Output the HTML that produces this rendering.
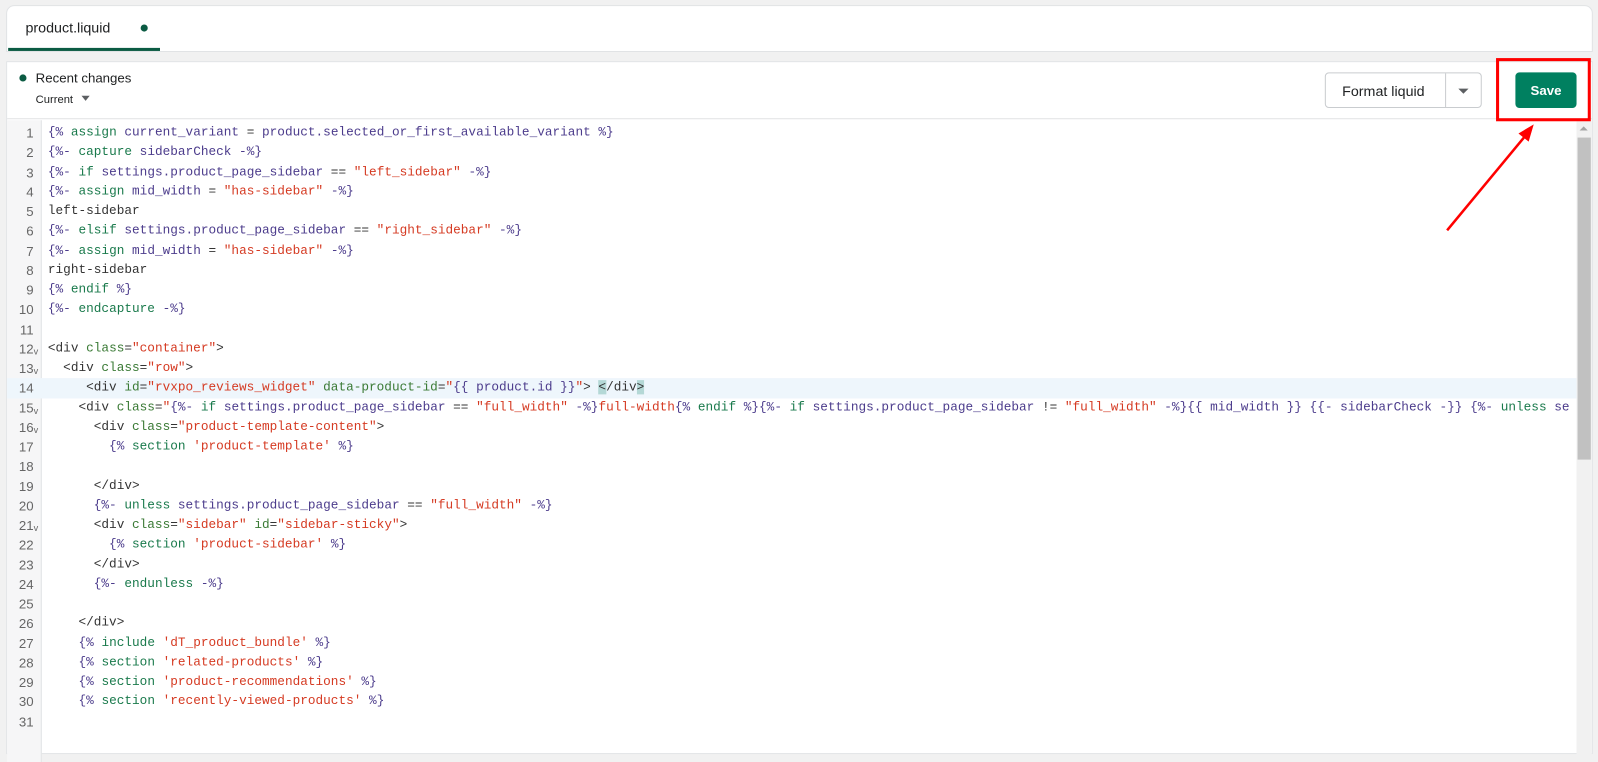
<!DOCTYPE html>
<html><head><meta charset="utf-8"><style>
*{margin:0;padding:0;box-sizing:border-box}
body{width:1598px;height:727px;background:#f1f1f1;font-family:"Liberation Sans",sans-serif;position:relative;overflow:hidden}
#w{position:absolute;left:0;top:0;width:1568px;height:714px;transform:scale(1.0191);transform-origin:0 0}
.tabbar{position:absolute;left:6px;top:5px;width:1557px;height:46px;background:#fff;border:1px solid #e1e3e5;border-radius:8px 8px 0 0}
.tab{position:absolute;left:1px;top:0;width:149px;height:44px;border-bottom:3px solid #0b5b43;font-size:14px;color:#202223;padding:13px 0 0 17px}
.tab .dot{position:absolute;left:130px;top:18px;width:7px;height:7px;border-radius:50%;background:#0b5b43}
.panel{position:absolute;left:6px;top:60px;width:1557px;height:680px;background:#fff;border:1px solid #e1e3e5}
.hdr{position:absolute;left:0;top:0;width:100%;height:56px;border-bottom:1px solid #e1e3e5}
.rc{position:absolute;left:28px;top:8px;font-size:13px;color:#202223}
.rc:before{content:"";position:absolute;left:-16px;top:4px;width:7px;height:7px;border-radius:50%;background:#0b5b43}
.cur{position:absolute;left:28px;top:31px;font-size:11px;color:#202223}
.cur:after{content:"";display:inline-block;margin-left:8px;border:4.5px solid transparent;border-top:5px solid #5c5f62;border-bottom:0;vertical-align:2px}
.fmt{position:absolute;left:1293px;top:10px;width:154px;height:35px;border:1px solid #c9cccf;border-radius:4px;font-size:14px;color:#202223}
.fmt span{position:absolute;left:16px;top:9px}
.fmt i{position:absolute;left:117px;top:0;width:1px;height:33px;background:#c9cccf}
.fmt b{position:absolute;left:130px;top:15px;border:5px solid transparent;border-top:5px solid #5c5f62;border-bottom:0}
.save{position:absolute;left:1480px;top:10px;width:60px;height:35px;background:#008060;border-radius:4px;color:#fff;font-weight:bold;font-size:13px;text-align:center;line-height:35px}
.gut{position:absolute;left:0;top:57px;width:34px;height:630px;background:#f6f6f7;border-right:1px solid #e1e3e5}
.code{position:absolute;left:0;top:60px;width:1540px;font-family:"Liberation Mono",monospace;font-size:12.5px;color:#333}
.ln{height:19.25px;line-height:19.25px;position:relative;white-space:pre}
.ln .n{position:absolute;left:0;width:26px;text-align:right;color:#666;font-family:"Liberation Sans",sans-serif;font-size:13px}
.ln .f{position:absolute;left:26px;top:3px;font-size:9px;color:#666;font-family:"Liberation Sans",sans-serif}
.ln .c{position:absolute;left:40px}
.hl{background:#eef6fc}
.k{color:#1a7a4c}.v{color:#4c3c8c}.s{color:#d53a22}.a{color:#3a7a35}.p{color:#333}
.sb{position:absolute;left:1540px;top:58px;width:15px;height:622px;background:#f1f1f1}
.sb div{position:absolute;left:1px;top:16px;width:13px;height:316px;background:#c1c1c1}
.sb:before{content:"";position:absolute;left:3px;top:5px;border:4px solid transparent;border-bottom:4px solid #a3a3a3;border-top:0}
.box{position:absolute;left:1468px;top:57px;width:93px;height:62px;border:3px solid #f00}
</style></head><body><div id="w">
<div class="tabbar"><div class="tab">product.liquid<div class="dot"></div></div></div>
<div class="panel">
<div class="hdr"><div class="rc">Recent changes</div><div class="cur">Current</div>
<div class="fmt"><span>Format liquid</span><i></i><b></b></div>
<div class="save">Save</div></div>
<div class="gut"></div>
<div class="code">
<div class="ln"><span class="n">1</span><span class="c"><span class="v">{%</span> <span class="k">assign</span> <span class="v">current_variant</span> = <span class="v">product.selected_or_first_available_variant %}</span></span></div>
<div class="ln"><span class="n">2</span><span class="c"><span class="v">{%-</span> <span class="k">capture</span> <span class="v">sidebarCheck -%}</span></span></div>
<div class="ln"><span class="n">3</span><span class="c"><span class="v">{%-</span> <span class="k">if</span> <span class="v">settings.product_page_sidebar</span> == <span class="s">"left_sidebar"</span> <span class="v">-%}</span></span></div>
<div class="ln"><span class="n">4</span><span class="c"><span class="v">{%-</span> <span class="k">assign</span> <span class="v">mid_width</span> = <span class="s">"has-sidebar"</span> <span class="v">-%}</span></span></div>
<div class="ln"><span class="n">5</span><span class="c">left-sidebar</span></div>
<div class="ln"><span class="n">6</span><span class="c"><span class="v">{%-</span> <span class="k">elsif</span> <span class="v">settings.product_page_sidebar</span> == <span class="s">"right_sidebar"</span> <span class="v">-%}</span></span></div>
<div class="ln"><span class="n">7</span><span class="c"><span class="v">{%-</span> <span class="k">assign</span> <span class="v">mid_width</span> = <span class="s">"has-sidebar"</span> <span class="v">-%}</span></span></div>
<div class="ln"><span class="n">8</span><span class="c">right-sidebar</span></div>
<div class="ln"><span class="n">9</span><span class="c"><span class="v">{%</span> <span class="k">endif</span> <span class="v">%}</span></span></div>
<div class="ln"><span class="n">10</span><span class="c"><span class="v">{%-</span> <span class="k">endcapture</span> <span class="v">-%}</span></span></div>
<div class="ln"><span class="n">11</span><span class="c"></span></div>
<div class="ln"><span class="n">12</span><span class="f">v</span><span class="c">&lt;div <span class="a">class</span>=<span class="s">"container"</span>&gt;</span></div>
<div class="ln"><span class="n">13</span><span class="f">v</span><span class="c">  &lt;div <span class="a">class</span>=<span class="s">"row"</span>&gt;</span></div>
<div class="ln hl"><span class="n">14</span><span class="c">     &lt;div <span class="a">id</span>=<span class="s">"rvxpo_reviews_widget"</span> <span class="a">data-product-id</span>=<span class="s">"</span><span class="v">{{ product.id }}</span><span class="s">"</span>&gt; <span style="background:#b4d8d6">&lt;</span>/div<span style="background:#b4d8d6">&gt;</span></span></div>
<div class="ln"><span class="n">15</span><span class="f">v</span><span class="c">    &lt;div <span class="a">class</span>=<span class="s">"</span><span class="v">{%-</span> <span class="k">if</span> <span class="v">settings.product_page_sidebar</span> == <span class="s">"full_width"</span> <span class="v">-%}</span><span class="s">full-width</span><span class="v">{%</span> <span class="k">endif</span> <span class="v">%}{%-</span> <span class="k">if</span> <span class="v">settings.product_page_sidebar</span> != <span class="s">"full_width"</span> <span class="v">-%}{{ mid_width }}</span> <span class="v">{{- sidebarCheck -}}</span> <span class="v">{%-</span> <span class="k">unless</span> <span class="v">se</span></span></div>
<div class="ln"><span class="n">16</span><span class="f">v</span><span class="c">      &lt;div <span class="a">class</span>=<span class="s">"product-template-content"</span>&gt;</span></div>
<div class="ln"><span class="n">17</span><span class="c">        <span class="v">{%</span> <span class="k">section</span> <span class="s">'product-template'</span> <span class="v">%}</span></span></div>
<div class="ln"><span class="n">18</span><span class="c"></span></div>
<div class="ln"><span class="n">19</span><span class="c">      &lt;/div&gt;</span></div>
<div class="ln"><span class="n">20</span><span class="c">      <span class="v">{%-</span> <span class="k">unless</span> <span class="v">settings.product_page_sidebar</span> == <span class="s">"full_width"</span> <span class="v">-%}</span></span></div>
<div class="ln"><span class="n">21</span><span class="f">v</span><span class="c">      &lt;div <span class="a">class</span>=<span class="s">"sidebar"</span> <span class="a">id</span>=<span class="s">"sidebar-sticky"</span>&gt;</span></div>
<div class="ln"><span class="n">22</span><span class="c">        <span class="v">{%</span> <span class="k">section</span> <span class="s">'product-sidebar'</span> <span class="v">%}</span></span></div>
<div class="ln"><span class="n">23</span><span class="c">      &lt;/div&gt;</span></div>
<div class="ln"><span class="n">24</span><span class="c">      <span class="v">{%-</span> <span class="k">endunless</span> <span class="v">-%}</span></span></div>
<div class="ln"><span class="n">25</span><span class="c"></span></div>
<div class="ln"><span class="n">26</span><span class="c">    &lt;/div&gt;</span></div>
<div class="ln"><span class="n">27</span><span class="c">    <span class="v">{%</span> <span class="k">include</span> <span class="s">'dT_product_bundle'</span> <span class="v">%}</span></span></div>
<div class="ln"><span class="n">28</span><span class="c">    <span class="v">{%</span> <span class="k">section</span> <span class="s">'related-products'</span> <span class="v">%}</span></span></div>
<div class="ln"><span class="n">29</span><span class="c">    <span class="v">{%</span> <span class="k">section</span> <span class="s">'product-recommendations'</span> <span class="v">%}</span></span></div>
<div class="ln"><span class="n">30</span><span class="c">    <span class="v">{%</span> <span class="k">section</span> <span class="s">'recently-viewed-products'</span> <span class="v">%}</span></span></div>
<div class="ln"><span class="n">31</span><span class="c"></span></div>
</div>
<div class="sb"><div></div></div>
</div>
<div class="box"></div>
<svg style="position:absolute;left:0;top:0" width="1568" height="714"><line x1="1420" y1="226" x2="1497" y2="133" stroke="#f00" stroke-width="2.5"/><polygon points="1505,122 1490,131 1500,139" fill="#f00"/></svg>
</div></body></html>
